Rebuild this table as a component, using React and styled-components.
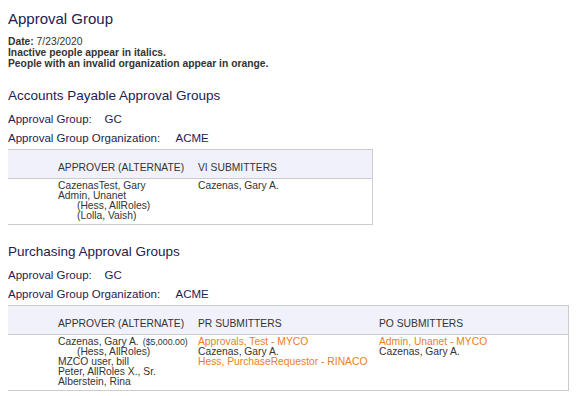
import React from 'react';
import styled, { createGlobalStyle } from 'styled-components';

// ==============================================
// ==============================================

const GlobalStyle = createGlobalStyle`
  body {
    margin: 8px;
    background: #ffffff;
    font-family: "Liberation Sans", Arial, sans-serif;
    color: #333333;
  }
`;

const Page = styled.div`
  display: flex;
  flex-direction: column;
`;

const Title = styled.h1`
  margin: 2px 0 0 0;
  font-size: 15px;
  line-height: 18px;
  font-weight: normal;
  color: #1e2150;
`;

const Notes = styled.div`
  margin-top: 8px;
  font-size: 10.3px;
  line-height: 11px;
  font-weight: bold;
  color: #333333;

  span { font-weight: normal; }
`;

const SectionTitle = styled.h2`
  margin: 19px 0 0 0;
  font-size: 13.5px;
  line-height: 16px;
  font-weight: normal;
  color: #1e2150;
`;

const Label = styled.div`
  margin-top: ${p => p.$first ? '8px' : '4px'};
  font-size: 11.5px;
  line-height: 15px;
  color: #1e2150;
  white-space: pre;
`;

// ==============================================
// ==============================================

const Table = styled.div`
  display: grid;
  grid-template-columns: ${p => p.$cols};
  width: ${p => p.$width}px;
  margin: 3px 0 0 -1px;
  border: 1px solid #cccccc;
  font-size: 10.3px;
  line-height: 10px;
  color: #333333;
`;

const HeadCell = styled.div`
  background: #f1f1fb;
  border-bottom: 1px solid #cccccc;
  padding: 13px 0 6px 0;
  height: 9px;
  text-transform: uppercase;
  white-space: nowrap;
`;

const Cell = styled.div`
  padding: 2px 0 3px 0;
  min-height: 10px;
`;

const Line = styled.div`
  white-space: nowrap;
  padding-left: ${p => p.$alt ? '19px' : '0'};
  color: ${p => p.$orange ? '#ee7d22' : 'inherit'};
`;

const Amount = styled.span`
  font-size: 8.8px;
  margin-left: 4px;
`;

// ==============================================
// ==============================================

const App = () => {
  return (
    <Page>
      <GlobalStyle />
      <Title>Approval Group</Title>
      <Notes>
        <div>Date: <span>7/23/2020</span></div>
        <div>Inactive people appear in italics.</div>
        <div>People with an invalid organization appear in orange.</div>
      </Notes>

      <SectionTitle>Accounts Payable Approval Groups</SectionTitle>
      <Label $first>{'Approval Group:    GC'}</Label>
      <Label>{'Approval Group Organization:     ACME'}</Label>
      <Table $cols="50px 140px 1fr" $width={364}>
        <HeadCell />
        <HeadCell>Approver (Alternate)</HeadCell>
        <HeadCell>VI Submitters</HeadCell>
        <Cell />
        <Cell>
          <Line>CazenasTest, Gary</Line>
          <Line>Admin, Unanet</Line>
          <Line $alt>(Hess, AllRoles)</Line>
          <Line $alt>(Lolla, Vaish)</Line>
        </Cell>
        <Cell>
          <Line>Cazenas, Gary A.</Line>
        </Cell>
      </Table>

      <SectionTitle>Purchasing Approval Groups</SectionTitle>
      <Label $first>{'Approval Group:    GC'}</Label>
      <Label>{'Approval Group Organization:     ACME'}</Label>
      <Table $cols="50px 140px 181px 1fr" $width={560}>
        <HeadCell />
        <HeadCell>Approver (Alternate)</HeadCell>
        <HeadCell>PR Submitters</HeadCell>
        <HeadCell>PO Submitters</HeadCell>
        <Cell />
        <Cell>
          <Line>Cazenas, Gary A.<Amount>($5,000.00)</Amount></Line>
          <Line $alt>(Hess, AllRoles)</Line>
          <Line>MZCO user, bill</Line>
          <Line>Peter, AllRoles X., Sr.</Line>
          <Line>Alberstein, Rina</Line>
        </Cell>
        <Cell>
          <Line $orange>Approvals, Test - MYCO</Line>
          <Line>Cazenas, Gary A.</Line>
          <Line $orange>Hess, PurchaseRequestor - RINACO</Line>
        </Cell>
        <Cell>
          <Line $orange>Admin, Unanet - MYCO</Line>
          <Line>Cazenas, Gary A.</Line>
        </Cell>
      </Table>
    </Page>
  );
};

export default App;
